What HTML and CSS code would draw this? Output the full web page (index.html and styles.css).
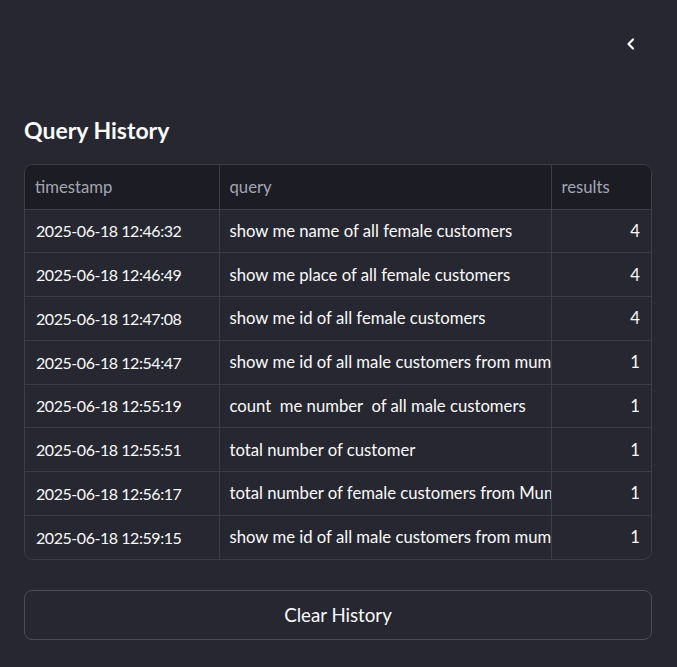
FILE: index.html
```html
<!DOCTYPE html>
<html>
<head>
<meta charset="utf-8">
<link rel="stylesheet" href="styles.css">
</head>
<body>
<div class="sidebar">
  <div class="topbar">
    <button class="collapse" aria-label="Collapse">
      <svg width="14" height="14" viewBox="0 0 14 14"><path d="M9 2.5 L4.5 7 L9 11.5" fill="none" stroke="#fafafa" stroke-width="2.2" stroke-linecap="round" stroke-linejoin="round"/></svg>
    </button>
  </div>
  <h2 class="title">Query History</h2>
  <div class="grid">
    <table>
      <colgroup><col class="c1"><col class="c2"><col class="c3"></colgroup>
      <thead>
        <tr><th>timestamp</th><th>query</th><th>results</th></tr>
      </thead>
      <tbody>
        <tr><td class="ts">2025-06-18 12:46:32</td><td>show me name of all female customers</td><td class="num">4</td></tr>
        <tr><td class="ts">2025-06-18 12:46:49</td><td>show me place of all female customers</td><td class="num">4</td></tr>
        <tr><td class="ts">2025-06-18 12:47:08</td><td>show me id of all female customers</td><td class="num">4</td></tr>
        <tr><td class="ts">2025-06-18 12:54:47</td><td>show me id of all male customers from mum</td><td class="num">1</td></tr>
        <tr><td class="ts">2025-06-18 12:55:19</td><td>count&nbsp; me number&nbsp; of all male customers</td><td class="num">1</td></tr>
        <tr><td class="ts">2025-06-18 12:55:51</td><td>total number of customer</td><td class="num">1</td></tr>
        <tr><td class="ts">2025-06-18 12:56:17</td><td>total number of female customers from Mum</td><td class="num">1</td></tr>
        <tr><td class="ts">2025-06-18 12:59:15</td><td>show me id of all male customers from mum</td><td class="num">1</td></tr>
      </tbody>
    </table>
  </div>
  <button class="clear">Clear History</button>
</div>
</body>
</html>
```
FILE: styles.css
```css
html, body {
  margin: 0;
  padding: 0;
  background: #262730;
  height: 100%;
}
body {
  font-family: "Lato", "Noto Sans", sans-serif;
  color: #fafafa;
}
.sidebar {
  padding: 0 25px 0 24px;
}
.topbar {
  height: 96px;
  display: flex;
  justify-content: flex-end;
  align-items: flex-start;
  padding-top: 35px;
  box-sizing: border-box;
}
.collapse {
  background: none;
  border: none;
  padding: 0;
  width: 18px;
  height: 18px;
  margin-right: 12px;
  display: flex;
  align-items: center;
  justify-content: center;
  cursor: pointer;
}
.title {
  margin: 0;
  font-size: 23px;
  font-weight: 700;
  line-height: 32px;
  padding-top: 18px;
  height: 68px;
  box-sizing: border-box;
}
.grid {
  border: 1px solid #3b3d48;
  border-radius: 9px;
  overflow: hidden;
  background: #262730;
}
table {
  width: 100%;
  table-layout: fixed;
  border-collapse: collapse;
  font-size: 16.7px;
}
col.c1 { width: 194px; }
col.c2 { width: 332px; }
col.c3 { width: auto; }
th, td {
  height: 43.75px;
  padding: 0 0 0 10px;
  white-space: nowrap;
  overflow: hidden;
  text-overflow: clip;
  text-align: left;
  border-right: 1px solid #3b3d48;
  border-bottom: 1px solid #3b3d48;
  box-sizing: border-box;
}
th:last-child, td:last-child { border-right: none; }
tbody tr:last-child td { border-bottom: none; }
th {
  height: 44px;
  background: #1b1c24;
  color: #a3a6b1;
  font-weight: 400;
}
td { color: #fafafa; }
td.ts {
  font-size: 16px;
  letter-spacing: -0.45px;
  padding-left: 11px;
}
td.num {
  text-align: right;
  padding: 0 11px 0 0;
}
.clear {
  display: block;
  width: 100%;
  margin-top: 30px;
  height: 50px;
  background: #262730;
  border: 1px solid #4a4c57;
  border-radius: 8px;
  color: #fafafa;
  font-family: "Lato", "Noto Sans", sans-serif;
  font-size: 18.7px;
}
```
